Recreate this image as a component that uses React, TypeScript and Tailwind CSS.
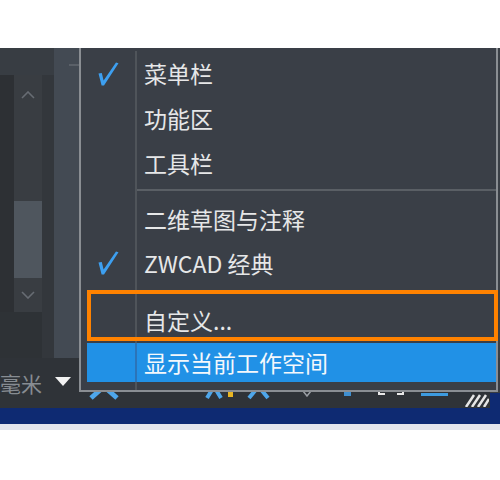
import React from "react";

const CJK = "font-['Noto_Sans_CJK_SC','Noto_Sans',sans-serif]";

function Check() {
  return (
    <svg width="22" height="26" viewBox="0 0 22 26">
      <path
        d="M1.5 12.5 L4.8 12 L6.6 19.5 L19 1.5 L21.5 2.2 L7 24.5 L4.6 24.5 Z"
        fill="#3d9ff0"
      />
    </svg>
  );
}

function Item({
  h,
  label,
  check,
  active,
}: {
  h: string;
  label: string;
  check?: boolean;
  active?: boolean;
}) {
  return (
    <div className={`flex ${h} ${active ? "bg-[#2191e6]" : ""}`}>
      <div
        className={`w-[50px] shrink-0 border-r-2 flex items-center pl-[10px] ${
          active ? "border-[#2b74b8]" : "border-[#4f545a]"
        }`}
      >
        {check ? <Check /> : null}
      </div>
      <div
        className={`flex items-center pl-[7px] text-[23px] leading-none whitespace-nowrap ${
          active ? "text-[#f4f8fc]" : "text-[#e6e7e8]"
        }`}
      >
        {label}
      </div>
    </div>
  );
}

function Sep({ h, mt }: { h: string; mt: string }) {
  return (
    <div className={`flex ${h}`}>
      <div className="w-[50px] shrink-0 border-r-2 border-[#4f545a]" />
      <div className="flex-1">
        <div className={`${mt} h-[2px] bg-[#5a5f65]`} />
      </div>
    </div>
  );
}

function Chevron({ up }: { up?: boolean }) {
  return (
    <svg width="14" height="8" viewBox="0 0 14 8">
      <polyline
        points={up ? "1,7 7,1 13,7" : "1,1 7,7 13,1"}
        fill="none"
        stroke="#676c73"
        strokeWidth="1.6"
      />
    </svg>
  );
}

export default function App() {
  return (
    <div className={`relative w-[500px] h-[480px] overflow-hidden bg-white ${CJK}`}>
      <div className="h-[48px] bg-white" />
      {/* dark application area */}
      <div className="flex h-[310px] bg-[#383c42]">
        <div className="w-[54px] flex flex-col bg-[#33373c]">
          <div className="h-[27px] bg-[#383d43]" />
          <div className="flex h-[237px]">
            <div className="w-[14px] bg-[#2d3034]" />
            <div className="w-[28px] flex flex-col bg-[#393d42]">
              <div className="h-[40px] flex items-center justify-center">
                <Chevron up />
              </div>
              <div className="h-[86px]" />
              <div className="h-[77px] bg-[#4f565e]" />
              <div className="h-[34px] flex items-center justify-center">
                <Chevron />
              </div>
            </div>
            <div className="flex-1 bg-[#33373c]" />
          </div>
          <div className="flex flex-1">
            <div className="w-[42px] bg-[#2e3236]" />
            <div className="flex-1 bg-[#33373c]" />
          </div>
        </div>
        <div className="w-[26px] bg-[#434a53] pt-[16px]">
          <div className="ml-[15px] w-[11px] h-[2px] bg-[#5a6068]" />
        </div>
        <div className="flex-1 bg-[#3a3f46]" />
      </div>
      {/* status bar */}
      <div className="flex h-[50px]">
        <div className="w-[490px] bg-[#2f3338] flex items-start">
          <div className="ml-0 w-[42px] mt-[12px] text-[21px] leading-[26px] text-[#878c92] whitespace-nowrap">
            毫米
          </div>
          <svg className="ml-[13px] mt-[19px]" width="16" height="9" viewBox="0 0 16 9">
            <polygon points="0,0 16,0 8,9" fill="#f2f2f2" />
          </svg>
          <svg className="ml-[17px] mt-[14px]" width="32" height="28" viewBox="0 0 32 28">
            <path d="M3 3 L29 26 M29 3 L3 26" stroke="#4ea6ea" strokeWidth="5" />
          </svg>
          <svg className="ml-[85px] mt-[14px]" width="18" height="28" viewBox="0 0 18 28">
            <path d="M2 3 L16 26 M16 3 L2 26" stroke="#4ea6ea" strokeWidth="4" />
          </svg>
          <div className="ml-[5px] mt-[34px] w-[5px] h-[5px] bg-[#e9b522]" />
          <svg className="ml-[14px] mt-[14px]" width="23" height="28" viewBox="0 0 23 28">
            <path d="M2 3 L21 26 M21 3 L2 26" stroke="#4ea6ea" strokeWidth="4" />
          </svg>
          <svg className="ml-[33px] mt-[33px]" width="8" height="6" viewBox="0 0 8 6">
            <polyline points="0,0 4,5 8,0" fill="none" stroke="#9a9ea4" strokeWidth="1.5" />
          </svg>
          <div className="ml-[33px] mt-[32px] w-[7px] h-[6px] bg-[#3f8fd0]" />
          <svg className="ml-[27px] mt-[30px]" width="26" height="8" viewBox="0 0 26 8">
            <path d="M1 0 L1 6 L7 6 M25 0 L25 6 L19 6" fill="none" stroke="#e8e8e8" strokeWidth="2" />
          </svg>
          <div className="ml-[17px] mt-[35px] w-[27px] h-[3px] bg-[#3d9be0]" />
          <svg className="ml-[16px] mt-[35px]" width="25" height="14" viewBox="0 0 25 14">
            <path d="M2 14 L10 2 M8 14 L16 2 M14 14 L22 2 M20 14 L25 6" stroke="#e6e6e6" strokeWidth="2.5" />
          </svg>
        </div>
        <div className="flex-1 flex flex-col">
          <div className="h-[35px] bg-[#383c42]" />
          <div className="flex-1 bg-[#0e2a72]" />
        </div>
      </div>
      <div className="h-[16px] bg-[#0e2a72]" />
      <div className="h-[6px] bg-[#e3e5ec]" />

      {/* dropdown menu */}
      <div className="absolute left-[79px] top-[48px] w-[419px] h-[344px] bg-[#3a3f47] border-l-2 border-r-2 border-b-2 border-[#8a8e93] pl-[6px] flex flex-col">
        <div className="h-[3px]" />
        <Item h="h-[45px]" label="菜单栏" check />
        <Item h="h-[45px]" label="功能区" />
        <Item h="h-[45px]" label="工具栏" />
        <Sep h="h-[11px]" mt="mt-[3px]" />
        <Item h="h-[44px]" label="二维草图与注释" />
        <Item h="h-[44px]" label="ZWCAD 经典" check />
        <Sep h="h-[12px]" mt="mt-[5px]" />
        <Item h="h-[46px]" label="自定义..." />
        <Item h="h-[39px]" label="显示当前工作空间" active />
        <div className="flex h-[8px]">
          <div className="w-[50px] shrink-0 border-r-2 border-[#4f545a]" />
        </div>
      </div>

      {/* orange annotation */}
      <div className="absolute left-[87px] top-[290px] w-[411px] h-[51px] border-4 border-[#ff8200]" />
    </div>
  );
}
